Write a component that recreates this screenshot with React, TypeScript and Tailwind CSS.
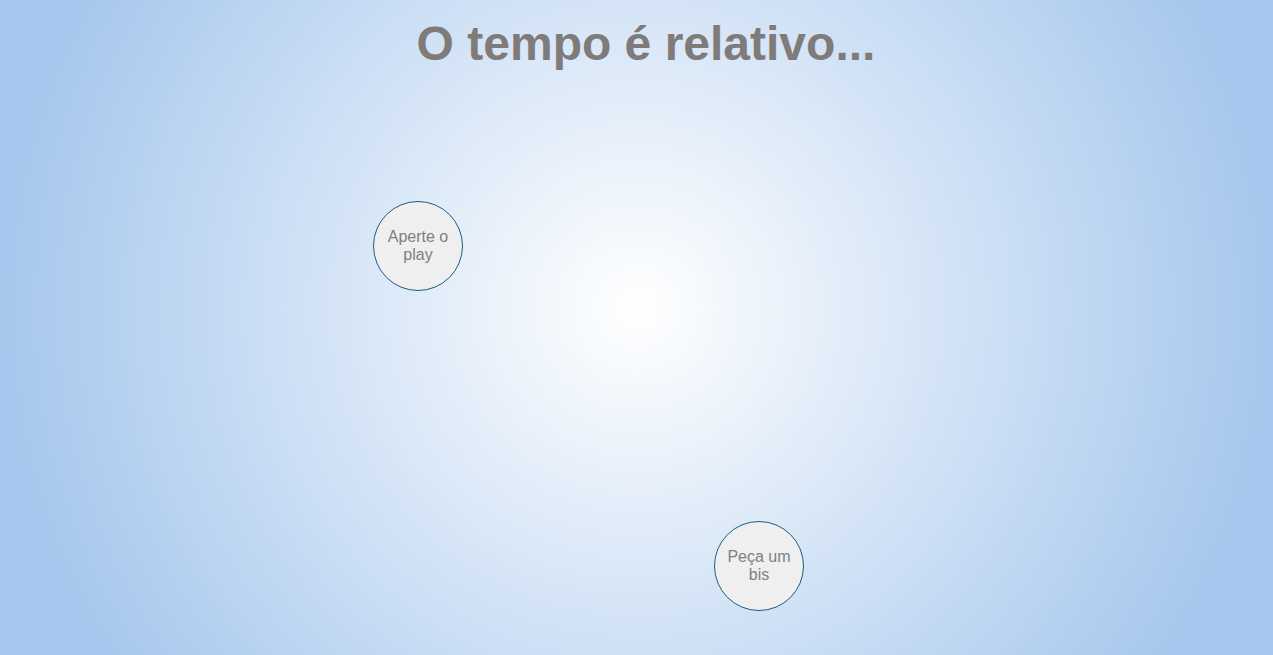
import React from 'react';

const BUTTONS = [
  { label: ['Aperte o', 'play'], pos: 'left-[373px] top-[201px]' },
  { label: ['Peça um', 'bis'], pos: 'left-[714px] top-[521px]' },
];

export default function App() {
  return (
    <div className="relative w-full h-[655px] overflow-hidden font-['Liberation_Sans',Arial,sans-serif] bg-[radial-gradient(circle_farthest-side_at_50%_47%,#ffffff,#a6c7ed)]">
      <h1 className="flex justify-center pt-[20px] pl-[19px] text-[48px] leading-[48px] font-bold text-[#7f7b7b]">
        O tempo é relativo...
      </h1>

      {BUTTONS.map((b, i) => (
        <button
          key={i}
          className={`absolute ${b.pos} flex flex-col items-center justify-center w-[90px] h-[90px] rounded-full border border-[#1b5e7e] bg-[#efefef] text-[16px] leading-[18px] text-[#808080]`}
        >
          {b.label.map((line) => (
            <span key={line}>{line}</span>
          ))}
        </button>
      ))}
    </div>
  );
}
